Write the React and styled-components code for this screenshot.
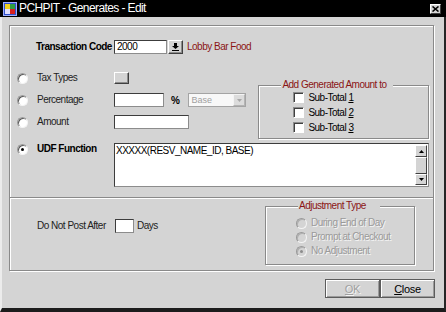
import React from "react";
import styled, { createGlobalStyle } from "styled-components";

const GlobalStyle = createGlobalStyle`
  html, body {
    margin: 0;
    padding: 0;
    background: #d4d4d4;
  }
  body {
    font-family: "Liberation Sans", Arial, sans-serif;
    font-size: 10px;
    letter-spacing: -0.5px;
    color: #000;
  }
  * {
    box-sizing: border-box;
  }
`;

const Window = styled.div`
  width: 446px;
  height: 312px;
  display: flex;
  flex-direction: column;
  background: #d4d4d4;
`;

const TitleBar = styled.div`
  height: 17px;
  background: #000;
  display: flex;
  align-items: center;
  padding: 0 5px 0 3px;
  gap: 2px;
`;

const TitleText = styled.span`
  color: #fff;
  font-size: 12px;
  letter-spacing: -0.6px;
  line-height: 17px;
`;

const CloseX = styled.div`
  margin-left: auto;
  width: 11px;
  height: 10px;
  background: #d4d4d4;
  border: 1px solid;
  border-color: #fff #404040 #404040 #fff;
  display: flex;
  align-items: center;
  justify-content: center;
`;

const Frame = styled.div`
  flex: 1;
  display: flex;
  flex-direction: column;
  padding: 8px 10px 0 7px;
  border-left: 2px solid #ececec;
  border-right: 2px solid #262626;
  border-bottom: 4px solid #1c1c1c;
`;

const Panel = styled.div`
  width: 425px;
  height: 246px;
  display: flex;
  flex-direction: column;
  border: 1px solid #8a8a8a;
  box-shadow: inset 1px 1px 0 #fff, 1px 1px 0 #fff;
`;

const TopSection = styled.div`
  height: 172px;
  padding: 11px 4px 0 6px;
  border-bottom: 1px solid #8a8a8a;
  box-shadow: 0 1px 0 #fff;
  display: flex;
  flex-direction: column;
`;

const BottomSection = styled.div`
  flex: 1;
  display: flex;
  align-items: flex-start;
  padding: 2px 18px 0 6px;
`;

const Row = styled.div`
  display: grid;
  grid-template-columns: 21px ${(p) => p.$lw || 77}px auto;
  align-items: ${(p) => (p.$top ? "start" : "center")};
  height: ${(p) => (p.$h ? `${p.$h}px` : "auto")};
  margin-top: ${(p) => p.$mt || 0}px;
`;

const Label = styled.span`
  font-weight: ${(p) => (p.$bold ? 700 : 400)};
  color: ${(p) => (p.$bold ? "#000" : "#222")};
  line-height: 12px;
  white-space: nowrap;
  margin-left: ${(p) => p.$ml || 0}px;
  margin-top: ${(p) => p.$mt || 0}px;
`;

const Fields = styled.div`
  display: flex;
  align-items: center;
`;

const TextInput = styled.div`
  width: ${(p) => p.$w}px;
  height: 14px;
  background: #fff;
  border: 1px solid;
  border-color: #3c3c3c #8c8c8c #8c8c8c #3c3c3c;
  line-height: 12px;
  padding-left: 2px;
`;

const RaisedButton = styled.div`
  width: ${(p) => p.$w}px;
  height: ${(p) => p.$h}px;
  margin-left: ${(p) => p.$ml || 0}px;
  background: #d4d4d4;
  border: 1px solid;
  border-color: #fff #404040 #404040 #fff;
  box-shadow: inset -1px -1px 0 #8c8c8c;
  display: flex;
  align-items: center;
  justify-content: center;
`;

const RedText = styled.span`
  color: #8b1414;
  margin-left: ${(p) => p.$ml || 0}px;
  line-height: 12px;
`;

const Radio = styled.span`
  width: 11px;
  height: 11px;
  margin-left: 1px;
  margin-top: ${(p) => p.$mt || 0}px;
  border-radius: 50%;
  background: ${(p) => (p.$disabled ? "#d4d4d4" : "#fff")};
  border: 1px solid;
  border-color: #9a9a9a #f4f4f4 #f4f4f4 #9a9a9a;
  box-shadow: inset 1px 1px 0 ${(p) => (p.$disabled ? "#b0b0b0" : "#5a5a5a")};
  display: flex;
  align-items: center;
  justify-content: center;
  &::after {
    content: "";
    width: 3px;
    height: 3px;
    border-radius: 50%;
    background: ${(p) => (p.$disabled ? "#8c8c8c" : "#000")};
    display: ${(p) => (p.$checked ? "block" : "none")};
  }
`;

const Middle = styled.div`
  display: flex;
  align-items: flex-start;
  margin-top: 10px;
`;

const LeftRows = styled.div`
  width: 243px;
  display: flex;
  flex-direction: column;
`;

const GroupBox = styled.fieldset`
  margin: ${(p) => p.$mt}px 0 0 auto;
  width: ${(p) => p.$w}px;
  height: ${(p) => p.$h}px;
  min-width: 0;
  padding: 0 0 0 ${(p) => p.$pl}px;
  border: 1px solid #8a8a8a;
  box-shadow: inset 1px 1px 0 #fff, 1px 1px 0 #fff;
`;

const Legend = styled.legend`
  color: #8b1414;
  line-height: 12px;
  padding: 0 ${(p) => p.$pr}px 0 1px;
  margin-left: ${(p) => p.$ml || 0}px;
  background: #d4d4d4;
`;

const CheckRow = styled.div`
  height: ${(p) => p.$h}px;
  display: flex;
  align-items: center;
  gap: 4px;
  padding-left: ${(p) => p.$pl || 0}px;
  margin-top: ${(p) => p.$mt || 0}px;
  color: ${(p) => (p.$disabled ? "#9a9a9a" : "#000")};
  text-shadow: ${(p) => (p.$disabled ? "1px 1px 0 #f4f4f4" : "none")};
  line-height: 12px;
  white-space: nowrap;
`;

const CheckBox = styled.span`
  width: 11px;
  height: 11px;
  background: #fff;
  border: 1px solid;
  border-color: #8c8c8c #fff #fff #8c8c8c;
  box-shadow: inset 1px 1px 0 #404040;
`;

const Percent = styled.span`
  font-weight: 700;
  margin: 0 9px 0 7px;
`;

const SelectBox = styled.div`
  width: 58px;
  height: 14px;
  background: #f8f8f8;
  border: 1px solid #a4a4a4;
  display: flex;
  align-items: center;
  justify-content: space-between;
  padding-left: 2px;
  font-size: 9px;
  letter-spacing: 0;
  color: #a0a0a0;
`;

const SelectArrow = styled.div`
  width: 12px;
  height: 12px;
  background: #dcdcdc;
  border: 1px solid;
  border-color: #f4f4f4 #b4b4b4 #b4b4b4 #f4f4f4;
  display: flex;
  align-items: center;
  justify-content: center;
`;

const TextArea = styled.div`
  width: 315px;
  height: 44px;
  background: #fff;
  border: 1px solid;
  border-color: #3c3c3c #8c8c8c #8c8c8c #3c3c3c;
  display: flex;
`;

const AreaText = styled.div`
  flex: 1;
  padding: 1px 1px;
  line-height: 12px;
`;

const ScrollBar = styled.div`
  width: 12px;
  margin: 1px 1px 1px 0;
  display: flex;
  flex-direction: column;
  background: #e4e4e4;
`;

const ScrollBtn = styled.div`
  height: ${(p) => p.$h}px;
  flex: ${(p) => (p.$grow ? 1 : "none")};
  background: #d4d4d4;
  border: 1px solid;
  border-color: #fff #404040 #404040 #fff;
  display: flex;
  align-items: center;
  justify-content: center;
`;

const DaysText = styled.span`
  margin-left: 3px;
  line-height: 12px;
  color: #222;
`;

const ButtonRow = styled.div`
  display: flex;
  justify-content: flex-end;
  margin: 8px -1px 0 0;
`;

const PushButton = styled.div`
  width: 55px;
  height: 19px;
  background: #d4d4d4;
  border: 1px solid #5c5c5c;
  box-shadow: inset 1px 1px 0 #fff, inset -1px -1px 0 #9a9a9a;
  display: flex;
  align-items: center;
  justify-content: center;
  color: ${(p) => (p.$disabled ? "#a0a0a0" : "#000")};
  text-shadow: ${(p) => (p.$disabled ? "1px 1px 0 #f4f4f4" : "none")};
  font-size: 11px;
  letter-spacing: -0.3px;
`;

const AppIcon = () => (
  <svg width="14" height="14" viewBox="0 0 14 14">
    <rect x="0.5" y="0.5" width="13" height="13" fill="#3050c8" stroke="#9fb0ff" />
    <rect x="2" y="2" width="5" height="5" fill="#f0d020" />
    <rect x="7" y="7" width="5" height="5" fill="#d82020" />
    <rect x="7" y="2" width="5" height="5" fill="#30a040" />
    <rect x="2" y="7" width="5" height="5" fill="#e0e0ff" />
  </svg>
);

const XGlyph = () => (
  <svg width="7" height="6" viewBox="0 0 7 6">
    <path d="M0.5 0.5 L6.5 5.5 M6.5 0.5 L0.5 5.5" stroke="#000" strokeWidth="1.6" />
  </svg>
);

const Arrow = ({ up, color = "#000" }) => (
  <svg width="5" height="3" viewBox="0 0 5 3">
    <polygon points={up ? "0,3 5,3 2.5,0" : "0,0 5,0 2.5,3"} fill={color} />
  </svg>
);

const PickGlyph = () => (
  <svg width="7" height="8" viewBox="0 0 7 8">
    <rect x="2" y="0" width="3" height="3" fill="#000" />
    <polygon points="0,3 7,3 3.5,6" fill="#000" />
    <rect x="0" y="7" width="7" height="1" fill="#000" />
  </svg>
);

export default function App() {
  return (
    <>
      <GlobalStyle />
      <Window>
        <TitleBar>
          <AppIcon />
          <TitleText>PCHPIT - Generates - Edit</TitleText>
          <CloseX>
            <XGlyph />
          </CloseX>
        </TitleBar>
        <Frame>
          <Panel>
            <TopSection>
              <Row $h={20}>
                <span />
                <Label $bold $ml={-1}>Transaction Code</Label>
                <Fields>
                  <TextInput $w={53}>2000</TextInput>
                  <RaisedButton $w={15} $h={14} $ml={1}>
                    <PickGlyph />
                  </RaisedButton>
                  <RedText $ml={4}>Lobby Bar Food</RedText>
                </Fields>
              </Row>

              <Middle>
                <LeftRows>
                  <Row $h={22}>
                    <Radio />
                    <Label>Tax Types</Label>
                    <Fields>
                      <RaisedButton $w={15} $h={12} />
                    </Fields>
                  </Row>
                  <Row $h={22}>
                    <Radio />
                    <Label>Percentage</Label>
                    <Fields>
                      <TextInput $w={50} />
                      <Percent>%</Percent>
                      <SelectBox>
                        Base
                        <SelectArrow>
                          <Arrow color="#a8a8a8" />
                        </SelectArrow>
                      </SelectBox>
                    </Fields>
                  </Row>
                  <Row $h={22}>
                    <Radio />
                    <Label>Amount</Label>
                    <Fields>
                      <TextInput $w={75} />
                    </Fields>
                  </Row>
                </LeftRows>

                <GroupBox $mt={12} $w={171} $h={60} $pl={22}>
                  <Legend $pr={6}>Add Generated Amount to</Legend>
                  <CheckRow $h={15} $pl={12} $mt={-1}>
                    <CheckBox />
                    <span>
                      Sub-Total <u>1</u>
                    </span>
                  </CheckRow>
                  <CheckRow $h={15} $pl={12}>
                    <CheckBox />
                    <span>
                      Sub-Total <u>2</u>
                    </span>
                  </CheckRow>
                  <CheckRow $h={15} $pl={12}>
                    <CheckBox />
                    <span>
                      Sub-Total <u>3</u>
                    </span>
                  </CheckRow>
                </GroupBox>
              </Middle>

              <Row $top $mt={4}>
                <Radio $checked $mt={1} />
                <Label $bold>UDF Function</Label>
                <TextArea>
                  <AreaText>XXXXX(RESV_NAME_ID, BASE)</AreaText>
                  <ScrollBar>
                    <ScrollBtn $h={12}>
                      <Arrow up />
                    </ScrollBtn>
                    <ScrollBtn $grow />
                    <ScrollBtn $h={11}>
                      <Arrow />
                    </ScrollBtn>
                  </ScrollBar>
                </TextArea>
              </Row>
            </TopSection>

            <BottomSection>
              <Row $h={14} $mt={19} $lw={78}>
                <span />
                <Label>Do Not Post After</Label>
                <Fields>
                  <TextInput $w={19} />
                  <DaysText>Days</DaysText>
                </Fields>
              </Row>
              <GroupBox $mt={0} $w={150} $h={65} $pl={29}>
                <Legend $pr={14} $ml={3}>Adjustment Type</Legend>
                <CheckRow $h={14} $mt={4} $disabled>
                  <Radio $disabled />
                  <span>During End of Day</span>
                </CheckRow>
                <CheckRow $h={14} $disabled>
                  <Radio $disabled />
                  <span>Prompt at Checkout</span>
                </CheckRow>
                <CheckRow $h={14} $disabled>
                  <Radio $disabled $checked />
                  <span>No Adjustment</span>
                </CheckRow>
              </GroupBox>
            </BottomSection>
          </Panel>

          <ButtonRow>
            <PushButton $disabled>
              <u>O</u>K
            </PushButton>
            <PushButton>
              <u>C</u>lose
            </PushButton>
          </ButtonRow>
        </Frame>
      </Window>
    </>
  );
}
